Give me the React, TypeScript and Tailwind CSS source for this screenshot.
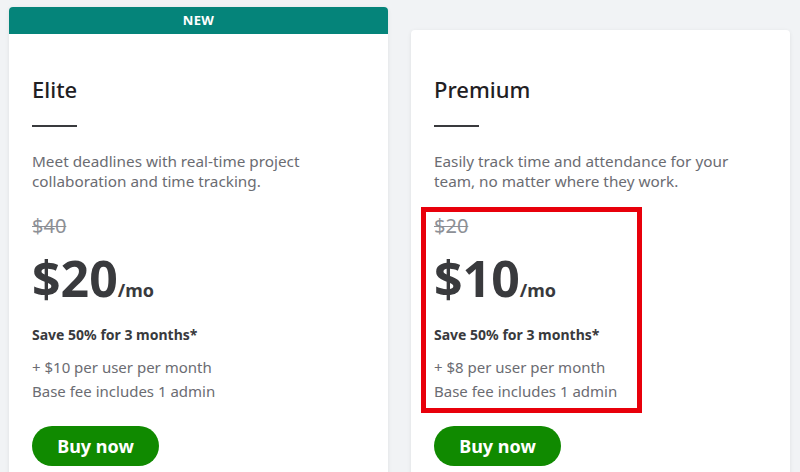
const FONT = "font-['Noto_Sans',sans-serif]";

type Plan = {
  name: string;
  desc: string[];
  oldPrice: string;
  price: string;
  perUser: string;
  isNew?: boolean;
  highlight?: boolean;
};

const PLANS: Plan[] = [
  {
    name: "Elite",
    desc: ["Meet deadlines with real-time project", "collaboration and time tracking."],
    oldPrice: "$40",
    price: "$20",
    perUser: "+ $10 per user per month",
    isNew: true,
  },
  {
    name: "Premium",
    desc: ["Easily track time and attendance for your", "team, no matter where they work."],
    oldPrice: "$20",
    price: "$10",
    perUser: "+ $8 per user per month",
    highlight: true,
  },
];

function PriceBlock({ plan }: { plan: Plan }) {
  return (
    <div>
      <div className="text-[20px] leading-[28px] text-[#8d9096] line-through decoration-1">{plan.oldPrice}</div>
      <div className="mt-[10px] flex items-baseline leading-[56px] text-[#393a3d]">
        <span className="text-[50px] font-bold">{plan.price}</span>
        <span className="text-[18px] font-bold">/mo</span>
      </div>
      <div className="mt-[7px] text-[14px] font-bold leading-[20px] text-[#393a3d]">Save 50% for 3 months*</div>
      <div className="mt-[10px] text-[15px] leading-[24px] text-[#6b6c72]">
        <div>{plan.perUser}</div>
        <div>Base fee includes 1 admin</div>
      </div>
    </div>
  );
}

function Card({ plan }: { plan: Plan }) {
  return (
    <div
      className={`w-[379px] overflow-hidden rounded-[4px] bg-white shadow-[0_1px_4px_rgba(0,0,0,0.08)] ${
        plan.isNew ? "mt-[7px]" : "mt-[30px]"
      }`}
    >
      {plan.isNew && (
        <div className="flex h-[27px] items-center justify-center bg-[#05847a] text-[13px] font-bold tracking-[0.3px] text-white">
          NEW
        </div>
      )}
      <div className={`px-[23px] ${plan.isNew ? "pt-[41px]" : "pt-[45px]"} pb-[20px]`}>
        <h2 className="text-[22px] font-medium leading-[28px] text-[#1f2023]">{plan.name}</h2>
        <div className="mt-[22px] h-[2px] w-[45px] bg-[#393a3d]" />
        <p className="mt-[24px] text-[15.3px] leading-[20px] text-[#6b6c72]">
          {plan.desc[0]}
          <br />
          {plan.desc[1]}
        </p>
        {plan.highlight ? (
          <div className="-mx-[13px] mt-[16px] w-[221px] border-[5px] border-[#e8000b] px-[8px] pb-[5px]">
            <PriceBlock plan={plan} />
          </div>
        ) : (
          <div className="mt-[21px] pb-[10px]">
            <PriceBlock plan={plan} />
          </div>
        )}
        <button
          type="button"
          className="mt-[13px] flex h-[40px] w-[127px] items-center justify-center rounded-full bg-[#108a00] text-[18px] font-bold text-white"
        >
          Buy now
        </button>
      </div>
    </div>
  );
}

export default function App() {
  return (
    <div className={`${FONT} flex h-[472px] w-[800px] items-start gap-[23px] overflow-hidden bg-[#f1f3f5] pl-[9px]`}>
      {PLANS.map((p) => (
        <Card key={p.name} plan={p} />
      ))}
    </div>
  );
}
